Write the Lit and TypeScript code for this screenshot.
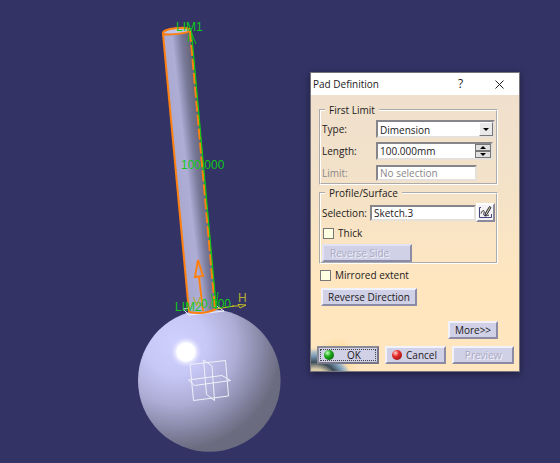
import { LitElement, html, css, svg } from "lit";
import { customElement, property } from "lit/decorators.js";

@customElement("model-view")
class ModelView extends LitElement {
  static styles = css`
    :host { display: block; height: 100%; }
    svg { display: block; width: 100%; height: 100%; }
    text { font: 12px "Liberation Sans", Arial, sans-serif; fill: #10c818; }
    .axis { fill: #b4ad32; }
    .edge { fill: none; stroke: #ff8010; stroke-width: 2; }
    .limit { fill: none; stroke: #10c818; stroke-width: 1; }
    .plane { fill: none; stroke: #f0f0fa; stroke-width: 1; }
  `;

  render() {
    return html`<svg viewBox="0 0 560 463" preserveAspectRatio="xMinYMin meet" role="img" aria-label="Sphere with a padded shaft">
      ${svg`
      <defs>
        <radialGradient id="ball" gradientUnits="userSpaceOnUse" cx="176" cy="344" r="122">
          <stop offset="0" stop-color="#d0d0ff"></stop>
          <stop offset=".25" stop-color="#c8c8f7"></stop>
          <stop offset=".5" stop-color="#acacd5"></stop>
          <stop offset=".72" stop-color="#8484a2"></stop>
          <stop offset=".86" stop-color="#6c6c81"></stop>
          <stop offset="1" stop-color="#6a6a7e"></stop>
        </radialGradient>
        <radialGradient id="shine" gradientUnits="userSpaceOnUse" cx="186" cy="352" r="16">
          <stop offset="0" stop-color="#fff"></stop>
          <stop offset=".55" stop-color="#fff"></stop>
          <stop offset="1" stop-color="#d0d0ff" stop-opacity="0"></stop>
        </radialGradient>
        <linearGradient id="shaft" gradientUnits="userSpaceOnUse" x1="176" y1="172" x2="203" y2="169">
          <stop offset="0" stop-color="#a9a9d0"></stop>
          <stop offset=".4" stop-color="#adadd6"></stop>
          <stop offset=".75" stop-color="#79799a"></stop>
          <stop offset="1" stop-color="#68687c"></stop>
        </linearGradient>
      </defs>
      <circle cx="209.3" cy="380.5" r="71.3" fill="url(#ball)"></circle>
      <circle cx="186" cy="352" r="16" fill="url(#shine)"></circle>
      <path class="plane" d="M190 364.500L225.500 360.500L228.500 396L193.500 400.500ZM188.500 380L222 375.500L230.500 380.500L194.500 385.500ZM203.500 360L212 366L214.500 400.500L206.500 394.500Z"></path>
      <path class="plane" d="M183 309L189 315L224 311L215 305Z"></path>
      <path d="M163 33Q176 26 190 30L216 309Q202 316 189 312Z" fill="url(#shaft)"></path>
      <path d="M163 33Q176 24 190 30Q184 35 163 33Z" fill="#c3c3e6"></path>
      <path class="edge" d="M189 312L163 34M163 34C161 28 188 26 190 30C190 34 166 35 163 34M189 312Q204 315 216 309"></path>
      <path class="limit" d="M191 31L216 309M190 29L188 42M190 29L196 44M216 309L211 294M216 309L218 292"></path>
      <path class="edge" stroke-dasharray="11 3" d="M190 31L215 309"></path>
      <path class="limit" d="M191.500 31L216.500 309"></path>
      <path class="edge" d="M203 311L199 277M195 277L198 260L203 276Z"></path>
      <path d="M216 309L234 306M238 304.500L246 305L240 308ZM232 306H238" fill="none" stroke="#cbc51c"></path>
      <text x="176" y="31">LIM1</text>
      <text x="181" y="169">100.000</text>
      <text x="175" y="311">LIM2</text>
      <text x="201" y="308">0.000</text>
      <text class="axis" x="193" y="306">V</text>
      <text class="axis" x="238" y="302">H</text>`}
    </svg>`;
  }
}

@customElement("pad-dialog")
class PadDialog extends LitElement {
  static styles = css`
    :host { display: block; font: 10px/16px "Open Sans", "Segoe UI", sans-serif; color: #1c1a20; }
    * { box-sizing: border-box; }
    button, input, select { font: inherit; color: inherit; margin: 0; border-radius: 0; }
    .window { border: 1px solid #77747c; background: linear-gradient(#eedfce, #f3e2c9 35%, #ffe6bf 72%, #ffe6bf); box-shadow: 0 2px 8px #0006; }
    .title { display: flex; align-items: center; height: 22px; background: #fff; padding: 0 0 0 2px; }
    .title h1 { flex: 1; margin: 0; font: inherit; }
    .title button { display: grid; place-items: center; width: 39px; height: 20px; padding: 0; border: 0; background: none; font-size: 12px; }
    .body { position: relative; padding: 7px 5px 7px; overflow: hidden; }
    .content { padding: 0 16px 0 3px; }
    fieldset { margin: 0; padding: 1px 1px 0; border: 2px groove #fff; min-width: 0; }
    legend { margin-left: 3px; padding: 0 4px; }
    .row { display: grid; grid-template-columns: 54px 1fr; align-items: center; min-height: 20px; }
    .row.pick { grid-template-columns: 48px 1fr 19px; padding-top: 1px; }
    .pick label { white-space: nowrap; }
    .field { position: relative; height: 18px; width: 100%; }
    .limits { display: grid; gap: 2px; }
    .short { width: 101px; height: 16px; }
    .muted { color: #8b8788; }
    input[type="text"], select { appearance: none; width: 100%; height: 100%; padding: 0 2px; background: #fff; border: 2px solid; border-color: #85858a #e6e0da #e6e0da #85858a; outline: 0; }
    .pick .field { height: 16px; }
    .arrow { position: absolute; right: 2px; top: 2px; width: 14px; height: 14px; background: #e9e9e9; border: 1px solid; border-color: #fff #777 #777 #fff; pointer-events: none; }
    .spin { width: 117px; display: flex; border: 2px solid; border-color: #85858a #e6e0da #e6e0da #85858a; }
    .spin input[type="text"] { border: 0; }
    .steps { display: flex; flex-direction: column; width: 16px; flex: none; }
    .steps button { flex: 1; display: grid; place-items: center; padding: 0; min-height: 0; background: #e0e0e0; border: 1px solid #777; }
    .steps svg { display: block; }
    .sketch { height: 19px; width: 19px; padding: 0; background: #f4f2f4; border: 2px solid; border-color: #fff #8a8a9c #8a8a9c #fff; }
    .sketch svg { display: block; }
    .check { display: flex; align-items: center; gap: 4px; height: 22px; padding-left: 1px; }
    .check input { appearance: none; width: 11px; height: 11px; background: #ffffe2; border: 1px solid #777; }
    .push { display: inline-flex; align-items: center; justify-content: center; height: 18px; padding: 0 6px; white-space: nowrap; background: #d0d0e6; border: 2px solid; border-color: #f2f2fc #8b8ba5 #8b8ba5 #f2f2fc; }
    .push:disabled { color: #aaaac0; text-shadow: 1px 1px 0 #f4f4ff; }
    fieldset .push, .direction { display: flex; }
    .side { width: 90px; justify-content: flex-start; border-color: #e2e2f2 #8b8ba5 #8b8ba5 #e2e2f2; }
    .direction { width: 96px; margin: 2px 0 0 2px; }
    .more { display: flex; justify-content: flex-end; padding: 15px 0 7px; }
    .more .push { width: 50px; }
    .actions { position: relative; display: grid; grid-template-columns: repeat(3, 1fr); gap: 6px; padding: 0 0 0 1px; }
    .actions .push { padding: 0 3px; }
    .actions .ok { border-color: #8b8b98 #77778a #77778a #8b8b98; outline: 1px dotted #444; outline-offset: -4px; }
    .label { flex: 1; text-align: center; }
    .flare { position: absolute; left: 0; bottom: 0; }
  `;

  render() {
    const tick = (d: string) => html`<svg width="8" height="5" viewBox="0 0 8 5"><path d=${d}></path></svg>`;
    return html`<section class="window" role="dialog" aria-labelledby="title">
      <header class="title">
        <h1 id="title">Pad Definition</h1>
        <button aria-label="Help">?</button>
        <button aria-label="Close"><svg width="9" height="9" viewBox="0 0 9 9"><path d="M.5.5L8.500 8.500M8.500.5L.5 8.500" stroke="#222"></path></svg></button>
      </header>
      <form class="body" @submit=${(e: Event) => e.preventDefault()}>
        <svg class="flare" width="50" height="34" viewBox="0 0 50 34" aria-hidden="true">
          <defs>
            <radialGradient id="glow"><stop offset="0" stop-color="#ffbd58" stop-opacity=".8"></stop><stop offset="1" stop-color="#ffd58a" stop-opacity="0"></stop></radialGradient>
            <radialGradient id="globe" gradientUnits="userSpaceOnUse" cx="4" cy="50" r="40"><stop offset="0" stop-color="#f0dfb8"></stop><stop offset=".45" stop-color="#d8cba8"></stop><stop offset=".62" stop-color="#3c4c58"></stop><stop offset=".78" stop-color="#7b9cb8"></stop><stop offset=".9" stop-color="#c3c9c4"></stop><stop offset="1" stop-color="#ffe0ae" stop-opacity="0"></stop></radialGradient>
          </defs>
          <circle cx="26" cy="22" r="22" fill="url(#glow)"></circle>
          <circle cx="4" cy="50" r="40" fill="url(#globe)"></circle>
        </svg>
        <div class="content">
          <fieldset>
            <legend>First Limit</legend>
            <div class="limits">
              <div class="row"><label for="type">Type:</label>
                <div class="field"><select id="type"><option>Dimension</option></select>
                  <span class="arrow"><svg width="12" height="12" viewBox="0 0 12 12"><path d="M3 5H9L6 8Z"></path></svg></span></div></div>
              <div class="row"><label for="length">Length:</label>
                <div class="field spin"><input id="length" type="text" value="100.000mm">
                  <span class="steps"><button type="button" aria-label="Increase">${tick("M1 4H7L4 1Z")}</button><button type="button" aria-label="Decrease">${tick("M1 1H7L4 4Z")}</button></span></div></div>
              <div class="row muted"><label for="limit">Limit:</label>
                <div class="field short"><input id="limit" type="text" value="No selection" readonly></div></div>
            </div>
          </fieldset>
          <fieldset>
            <legend>Profile/Surface</legend>
            <div class="row pick"><label for="selection">Selection:</label>
              <div class="field"><input id="selection" type="text" value="Sketch.3"></div>
              <button type="button" class="sketch" aria-label="Edit sketch"><svg width="15" height="15" viewBox="0 0 15 15" fill="none">
                <path d="M3 2.500H1.500V12.500H13.500V9" stroke="#44447c"></path>
                <path d="M3 8.500C4 5 7 4.500 6 8C5 11 7 11.500 11 10" stroke="#333"></path>
                <path d="M11.500 1.500L7.500 8L7 11L9 9.500L13 2.500Z" fill="#c8c890" stroke="#28284a"></path></svg></button></div>
            <label class="check"><input type="checkbox">Thick</label>
            <button type="button" class="push side" disabled>Reverse Side</button>
          </fieldset>
          <label class="check"><input type="checkbox">Mirrored extent</label>
          <button type="button" class="push direction">Reverse Direction</button>
          <div class="more"><button type="button" class="push">More&gt;&gt;</button></div>
        </div>
        <div class="actions">
          <button class="push ok"><status-ball tone="green"></status-ball><span class="label">OK</span></button>
          <button type="button" class="push"><status-ball tone="red"></status-ball><span class="label">Cancel</span></button>
          <button type="button" class="push" disabled>Preview</button>
        </div>
      </form>
    </section>`;
  }
}

@customElement("status-ball")
class StatusBall extends LitElement {
  @property() tone = "green";
  static styles = css`
    :host { display: block; margin-left: 2px; }
    .ball { width: 10px; height: 10px; border-radius: 50%; }
    .green { background: radial-gradient(circle at 35% 30%, #c8ffc0, #22b022 35%, #087008 75%, #044404); }
    .red { background: radial-gradient(circle at 35% 30%, #ffd8d0, #e83030 35%, #a81414 75%, #601010); }
  `;
  render() {
    return html`<div class="ball ${this.tone}"></div>`;
  }
}

@customElement("app-root")
class AppRoot extends LitElement {
  static styles = css`
    :host { display: block; position: relative; height: 100vh; overflow: hidden; background: #333366; }
    pad-dialog { position: absolute; left: 310px; top: 72px; width: 210px; }
  `;
  render() {
    return html`<model-view></model-view><pad-dialog></pad-dialog>`;
  }
}
